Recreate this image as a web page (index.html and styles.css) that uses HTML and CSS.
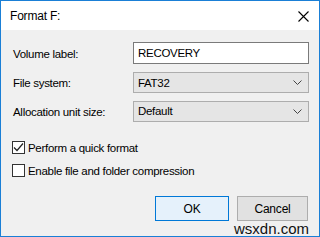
FILE: index.html
```
<!DOCTYPE html>
<html lang="en">
<head>
  <meta charset="UTF-8">
  <title>Format F:</title>
  <link rel="stylesheet" href="styles.css">
</head>
<body>

  <div class="window">
    <div class="titlebar">
      <span class="title">Format F:</span>
      <svg class="close" width="11" height="11" viewBox="0 0 11 11">
        <path d="M0.5 0.5 L10.5 10.5 M10.5 0.5 L0.5 10.5" stroke="#000" stroke-width="1.1" fill="none"/>
      </svg>
    </div>

    <div class="content">
      <div class="form">
        <label class="lbl">Volume label:</label>
        <div class="field field-text">RECOVERY</div>

        <label class="lbl">File system:</label>
        <div class="field field-select">
          <span>FAT32</span>
          <svg width="9" height="5" viewBox="0 0 9 5"><path d="M0.5 0.5 L4.5 4.5 L8.5 0.5" stroke="#444" fill="none"/></svg>
        </div>

        <label class="lbl">Allocation unit size:</label>
        <div class="field field-select">
          <span>Default</span>
          <svg width="9" height="5" viewBox="0 0 9 5"><path d="M0.5 0.5 L4.5 4.5 L8.5 0.5" stroke="#444" fill="none"/></svg>
        </div>
      </div>

      <div class="checks">
        <div class="check">
          <span class="box">
            <svg width="11" height="11" viewBox="0 0 11 11"><path d="M1 5.5 L4 8.5 L10 1.5" stroke="#222" stroke-width="1.2" fill="none"/></svg>
          </span>
          Perform a quick format
        </div>
        <div class="check">
          <span class="box"></span>
          Enable file and folder compression
        </div>
      </div>

      <div class="buttons">
        <button class="btn btn-ok">OK</button>
        <button class="btn">Cancel</button>
      </div>

      <span class="watermark">wsxdn.com</span>
    </div>
  </div>

</body>
</html>
```

FILE: styles.css
```
html, body {
  margin: 0;
  padding: 0;
}

body {
  font-family: 'Liberation Sans', Arial, sans-serif;
  font-size: 11.5px;
  letter-spacing: -0.3px;
  color: #000;
  background: #fff;
}

.window {
  width: 318px;
  height: 235px;
  border: 1px solid #1a7fd6;
  display: flex;
  flex-direction: column;
}

.titlebar {
  height: 29px;
  background: #fff;
  display: flex;
  align-items: center;
  justify-content: space-between;
  padding: 0 10px 0 9px;
}

.title {
  font-size: 12px;
  letter-spacing: -0.2px;
  margin-top: 1px;
}

.close {
  margin-top: 1px;
}

/* zone grise */
.content {
  flex: 1;
  background: #f0f0f0;
  padding: 12px 9px 0 12px;
  position: relative;
}

.form {
  display: grid;
  grid-template-columns: 120px 176px;
  grid-template-rows: 22px 21px 21px;
  row-gap: 8px;
  align-items: center;
}

.form .field:nth-of-type(3) {
  margin-top: -1px;
}

.lbl {
  padding-top: 1px;
}

.field {
  height: 100%;
  box-sizing: border-box;
  display: flex;
  align-items: center;
  padding: 0 3px 0 4px;
}

.field-text {
  background: #fff;
  border: 1px solid #7a7a7a;
}

.field-select {
  background: #e5e5e5;
  border: 1px solid #adadad;
  justify-content: space-between;
  padding-right: 6px;
}

.checks {
  margin-top: 19px;
  display: flex;
  flex-direction: column;
  gap: 10px;
}

.check {
  display: flex;
  align-items: center;
  gap: 3px;
  height: 13px;
  margin-left: -1px;
}

.box {
  width: 13px;
  height: 13px;
  box-sizing: border-box;
  border: 1px solid #333;
  background: #fff;
  display: flex;
  align-items: center;
  justify-content: center;
}

.buttons {
  margin-top: 19px;
  display: flex;
  justify-content: flex-end;
  gap: 8px;
}

.btn {
  width: 74px;
  height: 25px;
  font-family: inherit;
  font-size: 12px;
  letter-spacing: -0.2px;
  background: #e1e1e1;
  border: 1px solid #adadad;
  padding: 0;
  color: #000;
}

.btn-ok {
  background: #e5f1fb;
  border-color: #0078d7;
}

.btn + .btn {
  width: 71px;
  margin-right: 2px;
}

.watermark {
  position: absolute;
  right: 10px;
  bottom: 0;
  font-family: 'Liberation Sans', Arial, sans-serif;
  font-size: 15px;
  letter-spacing: 0;
  line-height: 15px;
  color: #111;
}
```
